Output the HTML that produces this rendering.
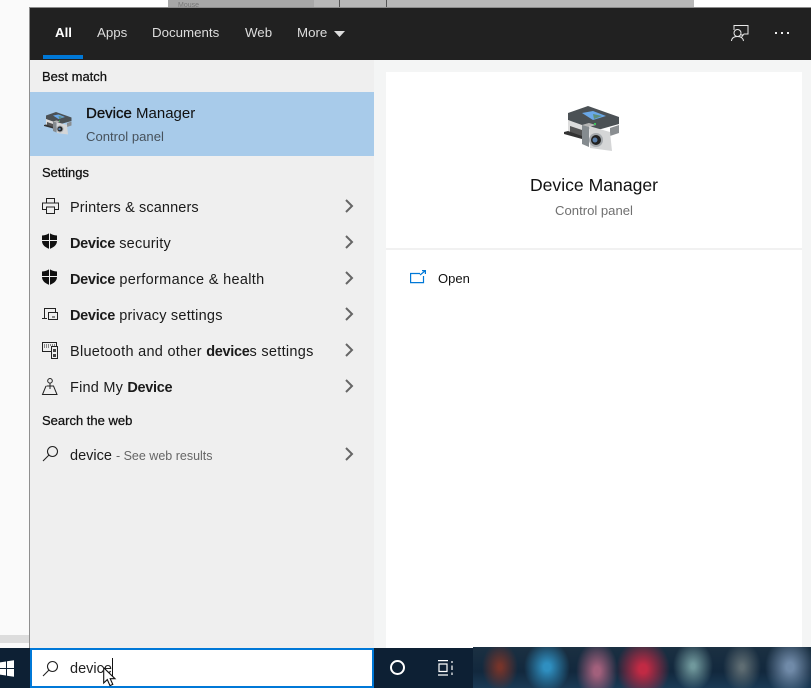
<!DOCTYPE html>
<html><head><meta charset="utf-8"><style>
html,body{margin:0;padding:0;width:811px;height:688px;overflow:hidden;background:#fafafa;font-family:"Liberation Sans",sans-serif}
.a{position:absolute;white-space:nowrap}
.t{font-size:14.5px;color:#1b1b1b;line-height:20px;left:70px;letter-spacing:.22px}
.t b{letter-spacing:-.3px}
.h{font-size:13px;color:#111;left:42px;line-height:16px;-webkit-text-stroke:.25px #111}
.n{font-size:13.3px;color:#ddd;top:25px;line-height:16px}
b{font-weight:700}
svg{position:absolute;overflow:visible}
</style></head><body>
<svg width="0" height="0" style="position:absolute"><defs>
<g id="dm">
<path d="M8 13 L28 6 L59 17 L59 24 L34 31 L8 20Z" fill="#4b5155"/>
<path d="M22 13 L33 11 L46 16 L33 20Z" fill="#6aa8e8"/>
<path d="M33 14 L42 16 L34 19Z" fill="#5f8f7a"/>
<path d="M8 20 L22 25 L22 38 L8 32Z" fill="#dcdcdc"/>
<path d="M10 26 L22 30 L22 37 L10 32Z" fill="#555"/>
<path d="M4 32 L8 31 L22 36 L22 39 L4 34Z" fill="#333"/>
<path d="M50 28 L59 25 L59 33 L50 36Z" fill="#8a8e91"/>
<path d="M22 25 L29 23 L29 47 L22 44Z" fill="#858b8f"/>
<path d="M22 25 L29 23 L36 25 L29 27Z" fill="#b5b5b5"/>
<path d="M29 26 L50 32 L52 51 L30 48Z" fill="#d5d6d7"/>
<circle cx="36" cy="40" r="7" fill="#a5a9ad"/><circle cx="36" cy="40" r="5" fill="#222"/><circle cx="35" cy="40" r="2.5" fill="#5a7ea8"/>
<rect x="34" y="23" width="2" height="2" fill="#3ec25a"/>
</g>
<g id="sh"><path d="M7.500 0 C5.500 1.500 3 2.300 0 2.500 L0 8 C0 12 3.500 14.500 7.500 16 C11.500 14.500 15 12 15 8 L15 2.500 C12 2.300 9.500 1.500 7.500 0Z" fill="#111"/><path d="M7.500 0V16M0 7.500H15" stroke="#f0f0f0" stroke-width="1"/></g>
<path id="ch" d="M1 1 L7 7 L1 13" fill="none" stroke="#666" stroke-width="2"/>
</defs></svg>

<!-- background windows -->
<div class="a" style="left:70px;top:0;width:98px;height:8px;background:#fff"></div>
<div class="a" style="left:168px;top:0;width:146px;height:8px;background:#a8a8a8"></div>
<div class="a" style="left:314px;top:0;width:380px;height:8px;background:#b8b8b8"></div>
<div class="a" style="left:694px;top:0;width:117px;height:8px;background:#fff"></div>
<div class="a" style="left:178px;top:2px;font-size:7px;color:#777">Mouse</div>
<div class="a" style="left:339px;top:0;width:48px;height:8px;border-left:1px solid #555;border-right:1px solid #555;box-sizing:border-box"></div>
<div class="a" style="left:0;top:635px;width:30px;height:8px;background:#ddd"></div>

<!-- panel -->
<div class="a" style="left:29px;top:7px;width:782px;height:1px;background:#8c8c8c"></div>
<div class="a" style="left:29px;top:8px;width:1px;height:640px;background:#8f8f8f"></div>
<div class="a" style="left:30px;top:8px;width:781px;height:52px;background:#212121"></div>
<div class="a" style="left:30px;top:60px;width:344px;height:588px;background:#efefef"></div>
<div class="a" style="left:374px;top:60px;width:437px;height:588px;background:#f4f5f5"></div>
<div class="a" style="left:386px;top:72px;width:416px;height:576px;background:#fff"></div>
<div class="a" style="left:386px;top:248px;width:416px;height:2px;background:#f1f1f1"></div>

<!-- tabs -->
<div class="a n" style="left:55px;color:#fff;font-weight:700">All</div>
<div class="a n" style="left:97px">Apps</div>
<div class="a n" style="left:152px">Documents</div>
<div class="a n" style="left:245px">Web</div>
<div class="a n" style="left:297px">More</div>
<svg style="left:334px;top:31px" width="11" height="6"><path d="M0 0H11L5.500 6Z" fill="#ddd"/></svg>
<div class="a" style="left:43px;top:55px;width:40px;height:4px;background:#0078d7"></div>
<svg style="left:731px;top:24px" width="18" height="18" fill="none" stroke="#e8e8e8" stroke-width="1"><path d="M3 6V1.500H17V10H13L11 12.500V10"/><circle cx="6.500" cy="9" r="3.500" fill="#212121"/><path d="M.5 17C.8 14 3 12.500 6.500 12.500S12 14 12.500 17"/></svg>
<div class="a" style="left:775px;top:32px;width:2px;height:2px;background:#eee;box-shadow:6px 0 #eee,12px 0 #eee"></div>

<!-- left list -->
<div class="a h" style="top:69px">Best match</div>
<div class="a" style="left:30px;top:92px;width:344px;height:64px;background:#a8cbea"></div>
<svg style="left:42px;top:109px" width="28" height="28"><use href="#dm" transform="scale(.5)"/></svg>
<div class="a" style="left:86px;top:104px;font-size:15px;line-height:20px;color:#111"><span style="-webkit-text-stroke:.35px #111">Device</span> Manager</div>
<div class="a" style="left:86px;top:129px;font-size:13.100px;line-height:16px;color:#47525c">Control panel</div>

<div class="a h" style="top:165px">Settings</div>

<svg style="left:42px;top:198px" width="17" height="16" fill="none" stroke="#222" stroke-width="1"><path d="M4.500 5V.5H12.500V5M4.500 11.500H.5V5H16.500V11.500H12.500M4.500 9H12.500V15.500H4.500Z"/></svg>
<div class="a t" style="top:198px;letter-spacing:.12px">Printers &amp; scanners</div>
<svg style="left:42px;top:233px" width="15" height="16"><use href="#sh"/></svg>
<div class="a t" style="top:234px"><b>Device</b> security</div>
<svg style="left:42px;top:269px" width="15" height="16"><use href="#sh"/></svg>
<div class="a t" style="top:270px;letter-spacing:.33px"><b>Device</b> performance &amp; health</div>
<svg style="left:42px;top:308px" width="17" height="13" fill="none" stroke="#222" stroke-width="1"><path d="M0 10.500H5M2.500 10V.5H13.500V4"/><path d="M6.500 4.500H15.500V11.500H6.500Z" fill="#efefef"/><path d="M10 9H13"/></svg>
<div class="a t" style="top:306px"><b>Device</b> privacy settings</div>
<svg style="left:42px;top:342px" width="17" height="17" fill="none" stroke="#222" stroke-width="1"><path d="M9 9.500H.5V.5H14.500V4"/><path d="M2 3H13M2 5H8" stroke-dasharray="1 1"/><path d="M9.500 4.500H15.500V16.500H9.500Z" fill="#efefef"/><rect x="11" y="7" width="3" height="3" fill="#444" stroke="none"/><rect x="11" y="12" width="3" height="3" fill="#444" stroke="none"/></svg>
<div class="a t" style="top:342px;letter-spacing:.28px">Bluetooth and other <b>device</b>s settings</div>
<svg style="left:42px;top:378px" width="16" height="17" fill="none" stroke="#222" stroke-width="1"><circle cx="8" cy="2.800" r="2.300"/><path d="M8 5V11M4.500 8H11.500L15 16.500H.5L4 8"/></svg>
<div class="a t" style="top:378px">Find My <b>Device</b></div>

<div class="a h" style="top:413px">Search the web</div>
<svg style="left:42px;top:445px" width="17" height="17" fill="none" stroke="#222" stroke-width="1.100"><circle cx="10.500" cy="6.500" r="5"/><path d="M7 10L1 16"/></svg>
<div class="a t" style="top:446px;letter-spacing:0">device <span style="font-size:12.500px;color:#666">- See web results</span></div>

<svg style="left:345px;top:199px" width="8" height="14"><use href="#ch"/></svg>
<svg style="left:345px;top:235px" width="8" height="14"><use href="#ch"/></svg>
<svg style="left:345px;top:271px" width="8" height="14"><use href="#ch"/></svg>
<svg style="left:345px;top:307px" width="8" height="14"><use href="#ch"/></svg>
<svg style="left:345px;top:343px" width="8" height="14"><use href="#ch"/></svg>
<svg style="left:345px;top:379px" width="8" height="14"><use href="#ch"/></svg>
<svg style="left:345px;top:447px" width="8" height="14"><use href="#ch"/></svg>

<!-- right pane -->
<svg style="left:560px;top:100px" width="60" height="52"><use href="#dm"/></svg>
<div class="a" style="left:386px;width:416px;text-align:center;top:174px;font-size:17.600px;line-height:22px;color:#111">Device Manager</div>
<div class="a" style="left:386px;width:416px;text-align:center;top:203px;font-size:13.100px;line-height:16px;color:#707070">Control panel</div>
<svg style="left:410px;top:270px" width="16" height="14" fill="none" stroke="#0078d7" stroke-width="1.200"><path d="M10 3.500H.6V12.600H13.500V6"/><path d="M10 5L15 1M12 .6H15.400V4"/></svg>
<div class="a" style="left:438px;top:271px;font-size:13px;line-height:16px;color:#111">Open</div>

<!-- taskbar -->
<div class="a" style="left:0;top:648px;width:811px;height:40px;background:#0d2034"></div>
<svg style="left:0;top:660px" width="14" height="17" fill="#fff"><path d="M-5 3L6 1.500V8H-5ZM7 1.300L14 .2V8H7ZM-5 9H6V15.500L-5 14ZM7 9H14V16.800L7 15.700Z"/></svg>
<div class="a" style="left:30px;top:648px;width:344px;height:40px;box-sizing:border-box;background:#fff;border:2px solid #0078d7"></div>
<svg style="left:42px;top:660px" width="17" height="17" fill="none" stroke="#222" stroke-width="1.100"><circle cx="10.500" cy="6.500" r="5"/><path d="M7 10L1 16"/></svg>
<div class="a" style="left:70px;top:660px;font-size:14.500px;line-height:18px;color:#222">device</div>
<div class="a" style="left:112px;top:658px;width:1px;height:20px;background:#111"></div>
<svg style="left:103px;top:667px" width="13" height="20"><path d="M.7.7V16L4.300 12.600 7 18.600 9.800 17.400 7.200 11.700H12Z" fill="#fff" stroke="#111" stroke-width="1.100"/></svg>
<div class="a" style="left:390px;top:660px;width:15px;height:15px;box-sizing:border-box;border:2px solid #fff;border-radius:50%"></div>
<svg style="left:437px;top:660px" width="17" height="16" fill="none" stroke="#fff" stroke-width="1.200"><path d="M1 .6H11M1 15H11M2 4H10V11.500H2Z"/><path d="M15 1V3M15 5.500V10M15 12.500V15"/></svg>

<div class="a" style="left:473px;top:647px;width:338px;height:41px;overflow:hidden;background:linear-gradient(#1b3042,#12283d 60%,#1a3a55)">
<div class="a" style="left:-25px;top:-30px;width:370px;height:100px;background:
radial-gradient(ellipse 18px 24px at 52px 50px,#76342a 10%,rgba(110,50,40,0) 100%),
radial-gradient(ellipse 23px 26px at 99px 50px,#2f8fc0 15%,rgba(47,143,192,0) 100%),
radial-gradient(ellipse 21px 30px at 149px 54px,#a2607c 15%,rgba(140,80,120,0) 100%),
radial-gradient(ellipse 27px 30px at 195px 52px,#c12a44 15%,rgba(150,40,70,0) 100%),
radial-gradient(ellipse 20px 25px at 245px 49px,#70989c 10%,rgba(100,140,150,0) 100%),
radial-gradient(ellipse 19px 25px at 294px 50px,#5e6c72 10%,rgba(90,100,110,0) 100%),
radial-gradient(ellipse 25px 30px at 342px 50px,#708aa8 15%,rgba(100,125,155,0) 100%)"></div>
</div>
</body></html>
